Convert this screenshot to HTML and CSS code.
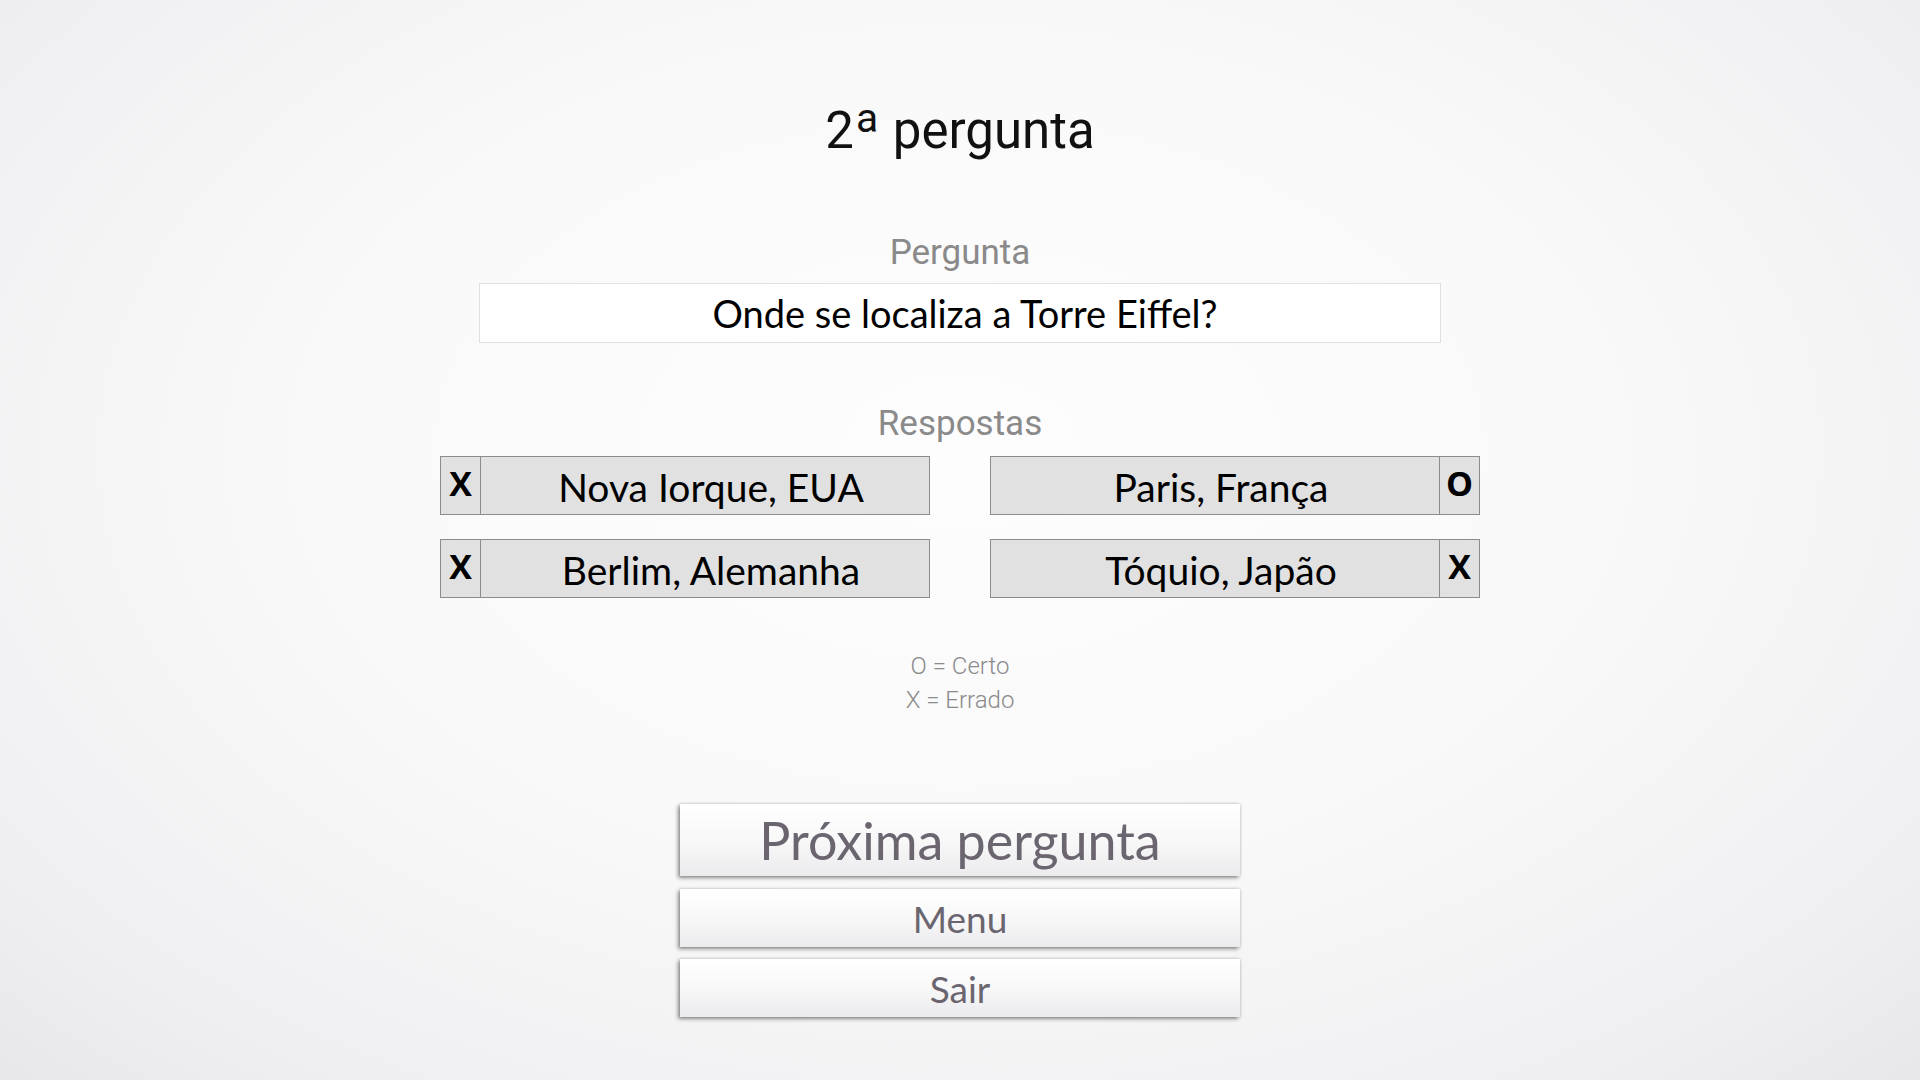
FILE: index.html
```html
<!DOCTYPE html>
<html lang="pt">
<head>
<meta charset="utf-8">
<title>2ª pergunta</title>
<link rel="stylesheet" href="styles.css">
</head>
<body>
<main class="screen">
  <h1 class="title">2<span class="ord">a</span> pergunta</h1>
  <div class="label label-q">Pergunta</div>
  <div class="question">Onde se localiza a Torre Eiffel?</div>
  <div class="label label-a">Respostas</div>
  <div class="answers">
    <div class="answer">
      <span class="mark">X</span>
      <span class="text">Nova Iorque, EUA</span>
    </div>
    <div class="answer answer-right">
      <span class="text">Paris, França</span>
      <span class="mark">O</span>
    </div>
    <div class="answer">
      <span class="mark">X</span>
      <span class="text">Berlim, Alemanha</span>
    </div>
    <div class="answer answer-right">
      <span class="text">Tóquio, Japão</span>
      <span class="mark">X</span>
    </div>
  </div>
  <div class="legend">
    <div>O = Certo</div>
    <div>X = Errado</div>
  </div>
  <div class="buttons">
    <button class="btn btn-main">Próxima pergunta</button>
    <button class="btn">Menu</button>
    <button class="btn">Sair</button>
  </div>
</main>
</body>
</html>
```

FILE: styles.css
```css
html, body {
  margin: 0;
  padding: 0;
  width: 1920px;
  height: 1080px;
  overflow: hidden;
}

body {
  background: radial-gradient(ellipse 75% 85% at 50% 42%, #fdfdfe 0%, #f9f9fa 45%, #efeff1 80%, #e5e5e7 100%);
  font-family: Roboto, "Liberation Sans", sans-serif;
}

.screen {
  display: flex;
  flex-direction: column;
  align-items: center;
  width: 1920px;
  height: 1080px;
}

.title {
  margin: 101px 0 0;
  height: 60px;
  line-height: 60px;
  font-size: 51px;
  font-weight: 400;
  color: #111;
  font-family: Roboto, "Liberation Sans", sans-serif;
}

.ord {
  font-size: 0.8em;
  line-height: 0;
  vertical-align: 0.4em;
  margin-left: 2px;
  margin-right: 2px;
}

.label {
  height: 40px;
  line-height: 40px;
  font-size: 35px;
  color: #8a8a8a;
}

.label-q {
  margin-top: 72px;
}

.question {
  box-sizing: border-box;
  margin-top: 10px;
  width: 962px;
  height: 60px;
  padding-left: 10px;
  background: #ffffff;
  border: 1px solid #e0e0e0;
  display: flex;
  align-items: center;
  justify-content: center;
  font-family: Lato, "Liberation Sans", sans-serif;
  font-size: 38px;
  color: #000;
}

.label-a {
  margin-top: 61px;
}

.answers {
  margin-top: 12px;
  display: grid;
  grid-template-columns: 490px 490px;
  grid-auto-rows: 59px;
  column-gap: 60px;
  row-gap: 24px;
}

.answer {
  box-sizing: border-box;
  display: flex;
  background: #e1e1e1;
  border: 1px solid #8c8c8c;
  font-family: Lato, "Liberation Sans", sans-serif;
  color: #000;
}

.mark {
  box-sizing: border-box;
  width: 40px;
  flex: none;
  border-right: 1px solid #8c8c8c;
  display: flex;
  justify-content: center;
  align-items: flex-start;
  padding-top: 2px;
  font-family: "Open Sans", "Liberation Sans", sans-serif;
  font-weight: 700;
  font-size: 34px;
  line-height: 48px;
}

.answer-right .mark {
  border-right: none;
  border-left: 1px solid #8c8c8c;
}

.text {
  flex: 1;
  display: flex;
  align-items: center;
  justify-content: center;
  font-size: 39px;
  padding-top: 2px;
  padding-left: 12px;
}

.legend {
  margin-top: 51px;
  font-size: 24px;
  font-weight: 300;
  line-height: 34px;
  color: #8a8a8a;
  text-align: center;
}

.buttons {
  margin-top: 87px;
  display: flex;
  flex-direction: column;
  gap: 12px;
}

.btn {
  box-sizing: border-box;
  width: 560px;
  height: 58px;
  border: none;
  padding: 0;
  background: linear-gradient(to bottom, #ffffff 0%, #f8f8f9 50%, #ebebed 100%);
  box-shadow: -2px 2px 4px rgba(0, 0, 0, 0.4), 0 0 3px rgba(0, 0, 0, 0.22);
  font-family: Lato, "Liberation Sans", sans-serif;
  font-size: 37px;
  color: #6b6570;
  display: flex;
  align-items: center;
  justify-content: center;
}

.btn-main {
  height: 72px;
  font-size: 52px;
  margin-bottom: 1px;
}
```
